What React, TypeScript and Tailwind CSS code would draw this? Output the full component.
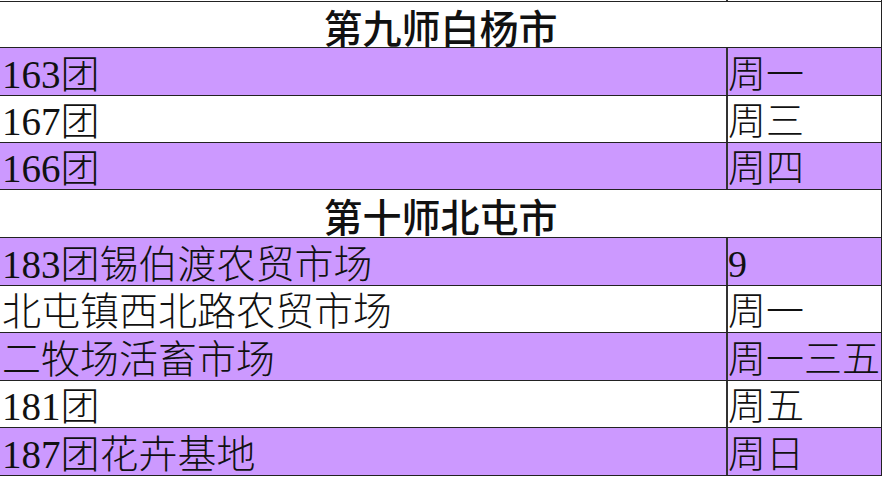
import React from 'react'

type Row =
  | { kind: 'head'; text: string; h: string }
  | { kind: 'item'; name: string; day: string; h: string; purple: boolean }

const rows: Row[] = [
  { kind: 'head', text: '第九师白杨市', h: 'h-[47px]' },
  { kind: 'item', name: '163团', day: '周一', h: 'h-[48px]', purple: true },
  { kind: 'item', name: '167团', day: '周三', h: 'h-[47px]', purple: false },
  { kind: 'item', name: '166团', day: '周四', h: 'h-[47px]', purple: true },
  { kind: 'head', text: '第十师北屯市', h: 'h-[48px]' },
  { kind: 'item', name: '183团锡伯渡农贸市场', day: '9', h: 'h-[48px]', purple: true },
  { kind: 'item', name: '北屯镇西北路农贸市场', day: '周一', h: 'h-[47px]', purple: false },
  { kind: 'item', name: '二牧场活畜市场', day: '周一三五', h: 'h-[48px]', purple: true },
  { kind: 'item', name: '181团', day: '周五', h: 'h-[47px]', purple: false },
  { kind: 'item', name: '187团花卉基地', day: '周日', h: 'h-[48px]', purple: true },
]

const cellFont = "font-['Liberation_Serif','Noto_Sans_CJK_SC',serif] font-light leading-[39px] text-[#111] whitespace-nowrap"
const headFont = "font-['Noto_Sans_CJK_SC','Noto_Sans',sans-serif] font-medium text-[39px] leading-[40px] text-[#111]"

export default function App() {
  return (
    <div className="w-[883px] h-[479px] bg-white overflow-hidden">
      <div className="w-[882px] border-r border-[#222]">
        {/* sliver of the row above */}
        <div className="grid grid-cols-[728px_1fr] h-[1px]">
          <div className="border-r-2 border-[#333]" />
          <div />
        </div>
        {rows.map((row, i) =>
          row.kind === 'head' ? (
            <div
              key={i}
              className={`${row.h} ${i === 0 ? 'border-t' : ''} border-b border-[#222] bg-white flex items-center justify-center pt-[2px]`}
            >
              <span className={headFont}>{row.text}</span>
            </div>
          ) : (
            <div
              key={i}
              className={`${row.h} border-b border-[#222] grid grid-cols-[728px_1fr] ${row.purple ? 'bg-[#cc99ff]' : 'bg-white'}`}
            >
              <div className="border-r-2 border-[#333] flex items-end pl-[2px] pb-[1px] overflow-hidden">
                <span className={`${cellFont} text-[39px]`}>{row.name}</span>
              </div>
              <div className="flex items-end pb-[1px] overflow-hidden">
                <span className={`${cellFont} text-[38px]`}>{row.day}</span>
              </div>
            </div>
          )
        )}
      </div>
    </div>
  )
}
